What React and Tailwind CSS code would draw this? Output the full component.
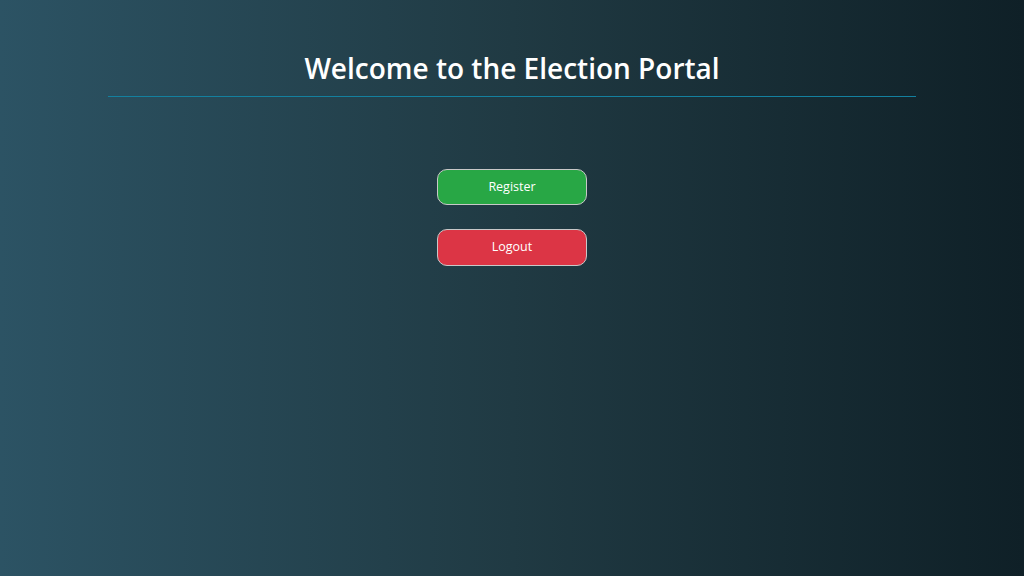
export default function App() {
  return (
    <div
      className="min-h-screen w-full bg-gradient-to-r from-[#2c5364] via-[#203a43] to-[#0f2027] text-white"
      style={{ fontFamily: '"Open Sans", "Noto Sans", sans-serif' }}
    >
      <div className="mx-auto w-[808px] pt-[46px]">
        <h1 className="text-center text-[28px] font-semibold leading-[44px] pb-[6px] border-b border-[#13809f]">
          Welcome to the Election Portal
        </h1>
        <div className="flex flex-col items-center gap-6 pt-[72px]">
          <button className="w-[150px] h-9 rounded-[10px] border border-[#c8c8c8] bg-[#28a745] text-[12.5px] text-white">
            Register
          </button>
          <button className="w-[150px] h-[37px] rounded-[10px] border border-[#c8c8c8] bg-[#dc3545] text-[12.5px] text-white">
            Logout
          </button>
        </div>
      </div>
    </div>
  );
}
